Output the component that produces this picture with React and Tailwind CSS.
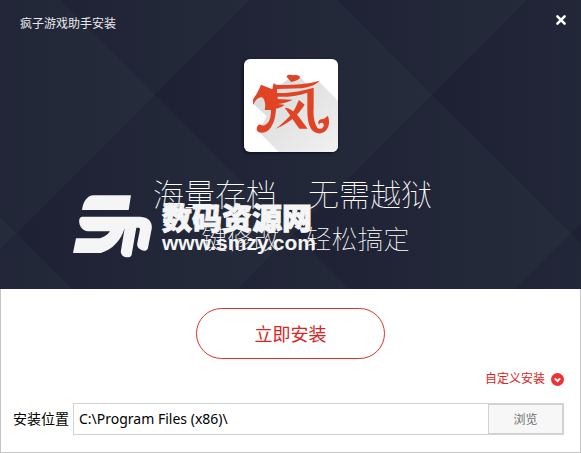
import React from 'react';

const diamonds = [
  [155, -44], [432, -44],
  [16, 95], [293, 95], [571, 95],
  [-122, 234], [155, 234], [432, 234], [710, 234],
  [16, 372], [293, 372], [571, 372],
];

function Backdrop() {
  return (
    <svg className="absolute inset-0 h-full w-full" viewBox="0 0 581 289" preserveAspectRatio="xMidYMid slice" aria-hidden="true">
      <defs>
        <linearGradient id="facet" x1="0" x2="1" y1="0" y2="0">
          <stop offset="0" stopColor="#1d2133" />
          <stop offset="1" stopColor="#272c3d" />
        </linearGradient>
      </defs>
      {diamonds.map(([x, y]) => (
        <path key={`${x},${y}`} d={`M${x - 139} ${y}l139 -139l139 139l-139 139z`} fill="url(#facet)" />
      ))}
    </svg>
  );
}

function AppLogo() {
  return (
    <svg className="h-[93px] w-[94px] rounded-md shadow-[-1px_1px_3px_#0b0d18]" viewBox="42 42 282 279" aria-label="疯">
      <defs>
        <linearGradient id="shade" x1="0" x2="1" y1="0" y2="1">
          <stop offset="0" stopColor="#d6d6d6" />
          <stop offset="1" stopColor="#f1f1f1" />
        </linearGradient>
      </defs>
      <path fill="#fff" d="M42 42h282v279H42z" />
      <path fill="url(#shade)" d="M70 177L82 160L100 157L172 104L208 94L230 117L265 108L324 167V321H146L86 260L110 214Z" />
      <g fill="#e14425">
        <path d="M170 96C170 88 182 89 191 91C201 88 210 92 210 98C205 106 191 109 184 111C179 107 177 102 170 96Z" />
        <path d="M93 119L127 133L131 114L138 119C180 121 229 119 270 107C257 119 239 127 215 130L141 132V144C179 145 209 139 251 128V189C249 216 253 234 262 248C273 257 283 247 281 238C275 227 264 239 268 240C261 233 266 222 276 223C282 223 287 217 294 212C300 232 297 248 287 257C274 268 258 268 247 256C237 245 232 225 232 197V143C201 154 168 156 143 155V162L188 164C176 170 160 175 143 177L164 179C155 187 145 189 138 191C137 216 131 238 117 254C104 267 83 265 80 254C80 243 86 237 93 239C99 246 112 239 118 226C122 215 123 205 123 195H104C108 181 105 162 96 157C83 157 75 168 70 179C68 171 68 164 73 157C80 146 87 135 93 119Z" />
        <path d="M164 188C181 188 190 200 204 212L233 251H208C191 229 181 209 164 188Z" />
        <path d="M207 165L224 179C210 200 187 231 136 252C158 235 180 215 193 194C199 185 201 175 207 165Z" />
      </g>
    </svg>
  );
}

function Watermark() {
  return (
    <div className="absolute top-[195px] left-[73px] flex items-start gap-2.5 text-[#f5f5f5]">
      <svg className="h-[63px] w-[79px]" viewBox="0 0 237 189" fill="currentColor" aria-hidden="true">
        <path d="M27 45C30 20 43 1 62 1H174L167 45Z" />
        <path d="M28 65H202C229 67 239 83 236 102L225 158C223 169 211 169 204 164C195 160 191 153 193 144L201 103C201 99 198 98 194 98H190L176 179C174 188 164 188 156 186C146 182 142 175 144 166L155 99C145 135 119 163 84 174H0L9 130H81C94 126 105 119 111 109H43C26 106 16 90 19 73C21 68 23 65 28 65Z" />
      </svg>
      <div className="flex flex-col gap-0.5 pt-1.5 font-['Noto_Sans_CJK_SC',sans-serif] font-black">
        <p className="text-[30px] leading-[30px] whitespace-nowrap [-webkit-text-stroke:1px_#f5f5f5]">数码资源网</p>
        <p className="font-['Liberation_Sans',sans-serif] text-[21px] leading-5 font-bold">www.smzy.com</p>
      </div>
    </div>
  );
}

export default function App() {
  return (
    <main className="flex min-h-screen flex-col bg-white font-['Noto_Sans','Noto_Sans_CJK_SC',sans-serif]">
      <section className="relative h-[289px] overflow-hidden bg-[#212638]">
        <Backdrop />
        <div className="relative flex flex-col">
          <header className="flex h-11 items-center justify-between pr-3.5 pl-5 text-white">
            <h1 className="pt-1 text-xs font-normal text-[#e8e9ec]">疯子游戏助手安装</h1>
            <button type="button" aria-label="关闭" className="pb-1">
              <svg className="size-3" viewBox="0 0 12 12" stroke="currentColor" strokeWidth="2.6" strokeLinecap="round">
                <path d="M2.4 2.4l7.2 7.2M9.6 2.4L2.4 9.6" />
              </svg>
            </button>
          </header>
          <div className="flex flex-col items-center pt-[15px]">
            <AppLogo />
            <div className="flex flex-col items-center pt-[18px] pl-1 font-['Noto_Sans_CJK_SC',sans-serif] font-thin whitespace-pre text-white">
              <p className="text-[31px] leading-[46px]">海量存档　无需越狱</p>
              <p className="text-[26px] leading-11">　键修改　轻松搞定</p>
            </div>
          </div>
        </div>
        <Watermark />
      </section>

      <section className="flex flex-1 flex-col border border-t-0 border-[#c5c5c5] pt-[19px] pr-4 pl-3">
        <button type="button" className="ml-1 h-[51px] w-[189px] self-center rounded-[26px] border border-[#e03127] text-lg text-[#d9251d]">
          立即安装
        </button>
        <button type="button" className="mt-2.5 flex h-5 items-center gap-1.5 self-end text-xs text-[#d9251d]">
          自定义安装
          <svg className="size-[13px]" viewBox="0 0 13 13" fill="none" aria-hidden="true">
            <circle cx="6.5" cy="6.5" r="6.5" fill="#ee3135" />
            <path d="M3.8 5.4L6.5 8L9.2 5.4" stroke="#fff" strokeWidth="2" />
          </svg>
        </button>
        <div className="mt-3.5 flex items-center gap-1">
          <label htmlFor="install-path" className="shrink-0 text-sm text-black">安装位置</label>
          <div className="flex h-8 min-w-0 flex-1 border border-[#d2d2d2]">
            <input
              id="install-path"
              type="text"
              defaultValue="C:\Program Files (x86)\"
              className="min-w-0 flex-1 px-[5px] font-['Noto_Sans',sans-serif] text-sm text-black outline-none"
            />
            <button type="button" className="w-[75px] border border-[#d2d2d2] bg-[#f7f7f7] pt-0.5 text-xs text-[#707070]">浏览</button>
          </div>
        </div>
      </section>
    </main>
  );
}
